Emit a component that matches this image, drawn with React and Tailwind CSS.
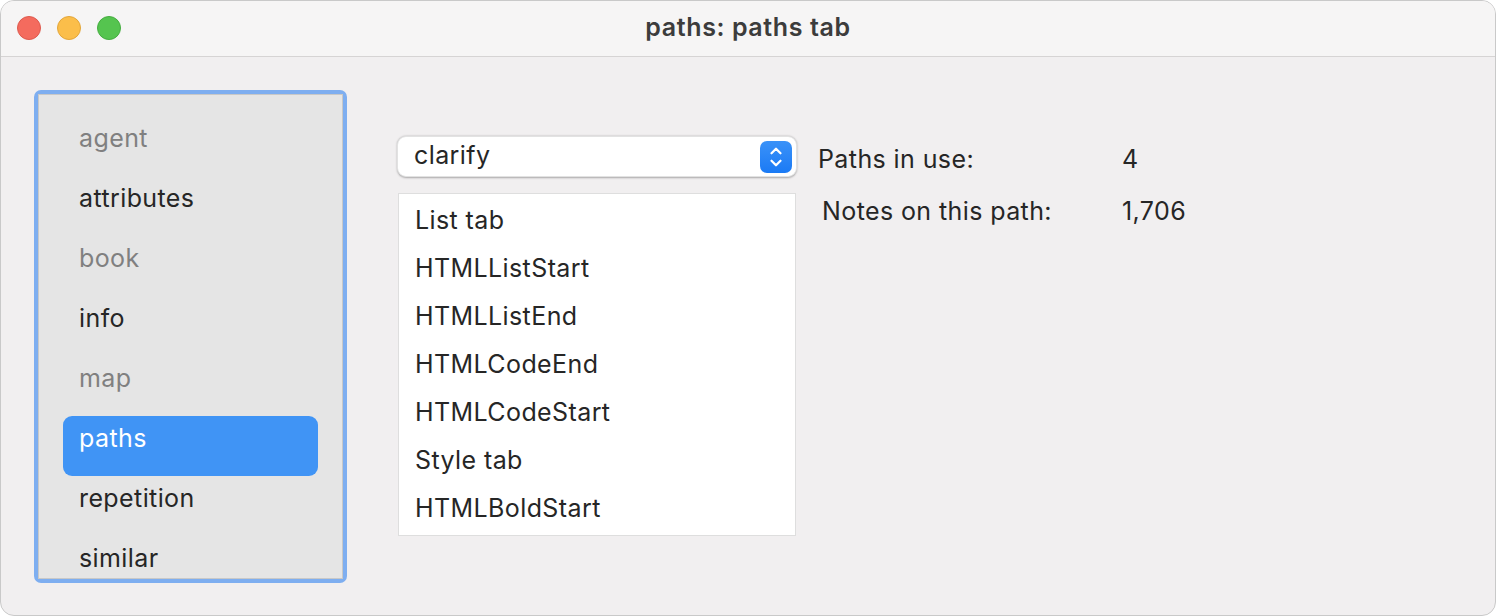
import { ChevronUp, ChevronDown } from "lucide-react";

const sections = [
  { name: "agent", dim: true },
  { name: "attributes" },
  { name: "book", dim: true },
  { name: "info" },
  { name: "map", dim: true },
  { name: "paths", selected: true },
  { name: "repetition" },
  { name: "similar" },
];

const pathItems = [
  "List tab",
  "HTMLListStart",
  "HTMLListEnd",
  "HTMLCodeEnd",
  "HTMLCodeStart",
  "Style tab",
  "HTMLBoldStart",
];

export default function App() {
  return (
    <div
      className="w-[1496px] h-[616px] bg-white text-[#262626]"
      style={{ fontFamily: "Inter, 'Noto Sans', sans-serif" }}
    >
      <div className="w-full h-full rounded-[14px] border border-[#c9c9c9] bg-[#f1eff0] overflow-hidden flex flex-col">
        {/* Title bar */}
        <div className="relative h-[56px] shrink-0 bg-[#f6f5f5] border-b border-[#d6d4d4] flex items-center justify-center">
          <div className="absolute left-[16px] top-[15px] flex gap-[16px]">
            <span className="w-[24px] h-[24px] rounded-full bg-[#f46b5e] border border-[#de5a4e]" />
            <span className="w-[24px] h-[24px] rounded-full bg-[#fbbe4a] border border-[#e3a63a]" />
            <span className="w-[24px] h-[24px] rounded-full bg-[#55c44f] border border-[#45ad40]" />
          </div>
          <span className="text-[25px] font-semibold text-[#3c3c3c] tracking-[0.6px] -mt-[1px]">paths: paths tab</span>
        </div>

        {/* Body */}
        <div className="flex pl-[33px] pt-[33px] text-[25px] tracking-[0.4px]">
          {/* Sidebar */}
          <div className="w-[313px] h-[493px] rounded-[7px] bg-[#7eaef0] p-[4px]">
            <div className="w-full h-full bg-[#e5e5e5] border border-[#c8c8c8] overflow-hidden pt-[21px] px-[24px]">
              {sections.map((s) => (
                <div
                  key={s.name}
                  className={`h-[60px] rounded-[9px] px-[16px] pt-[7px] leading-[30px] ${
                    s.selected ? "bg-[#4094f5] text-white" : s.dim ? "text-[#808080]" : "text-[#262626]"
                  }`}
                >
                  {s.name}
                </div>
              ))}
            </div>
          </div>

          {/* Middle column */}
          <div className="ml-[50px] pt-[46px] w-[400px]">
            <div className="h-[41px] bg-white rounded-[9px] shadow-[0_0.5px_2px_rgba(0,0,0,0.3)] border border-[#e2e2e2] flex items-center justify-between pl-[16px] pr-[4px]">
              <span className="leading-none -mt-[2px]">clarify</span>
              <span className="w-[32px] h-[32px] rounded-[7px] bg-gradient-to-b from-[#3a92f8] to-[#1a7af5] flex flex-col items-center justify-center text-white">
                <ChevronUp size={18} strokeWidth={3} className="-mb-[3px]" />
                <ChevronDown size={18} strokeWidth={3} className="-mt-[3px]" />
              </span>
            </div>
            <div className="mt-[16px] ml-[1px] w-[398px] h-[343px] bg-white border border-[#dedede] pt-[3px]">
              {pathItems.map((p) => (
                <div key={p} className="h-[48px] pl-[16px] flex items-center">
                  {p}
                </div>
              ))}
            </div>
          </div>

          {/* Stats */}
          <div className="ml-[21px] pt-[48px]">
            <div className="flex h-[44px] items-center">
              <span className="w-[304px]">Paths in use:</span>
              <span>4</span>
            </div>
            <div className="flex h-[60px] items-center pl-[4px]">
              <span className="w-[300px]">Notes on this path:</span>
              <span>1,706</span>
            </div>
          </div>
        </div>
      </div>
    </div>
  );
}
